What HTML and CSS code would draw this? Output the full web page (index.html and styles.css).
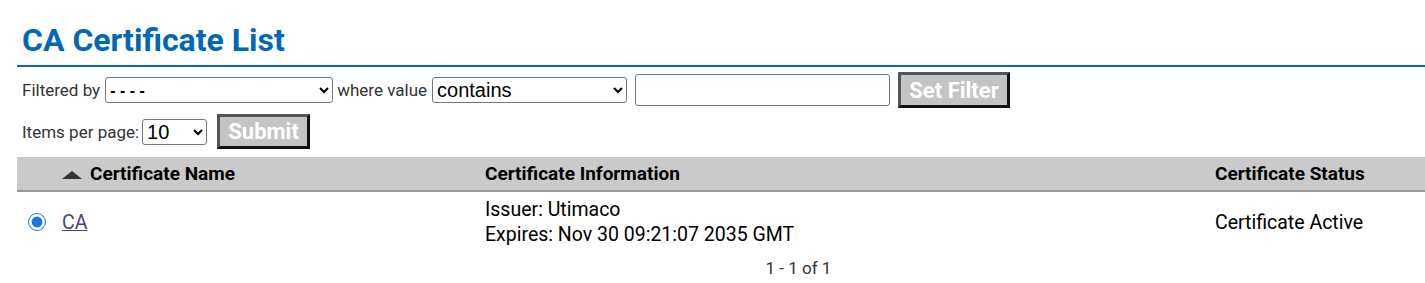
FILE: index.html
```html
<!DOCTYPE html>
<html>
<head>
<meta charset="utf-8">
<link rel="stylesheet" href="styles.css">
</head>
<body>
<div class="page">
  <h1 class="title">CA Certificate List</h1>
  <form class="filters">
    <div class="filter-row">
      <label class="lbl">Filtered by</label>
      <select class="sel sel-field"><option>- - - -</option></select>
      <label class="lbl">where value</label>
      <select class="sel sel-op"><option>contains</option></select>
      <input class="txt" type="text">
      <button type="button" class="btn btn-filter">Set Filter</button>
    </div>
    <div class="filter-row row2">
      <label class="lbl lbl-per">Items per page:</label>
      <select class="sel sel-per"><option>10</option></select>
      <button type="button" class="btn btn-submit">Submit</button>
    </div>
  </form>
  <table class="list">
    <colgroup>
      <col class="c1"><col class="c2"><col class="c3"><col class="c4">
    </colgroup>
    <thead>
      <tr>
        <th></th>
        <th><span class="sort"></span>Certificate Name</th>
        <th>Certificate Information</th>
        <th>Certificate Status</th>
      </tr>
    </thead>
    <tbody>
      <tr>
        <td class="radio-cell"><input type="radio" name="cert" checked class="radio"></td>
        <td><a href="#" class="link">CA</a></td>
        <td>Issuer: Utimaco<br>Expires: Nov 30 09:21:07 2035 GMT</td>
        <td>Certificate Active</td>
      </tr>
    </tbody>
  </table>
  <div class="pager">1 - 1 of 1</div>
</div>
</body>
</html>
```
FILE: styles.css
```css
html, body {
  margin: 0;
  padding: 0;
  overflow: hidden;
  background: #fff;
}
body {
  font-family: Roboto, "Liberation Sans", sans-serif;
  color: #111;
}
.page {
  width: 1563px;
  padding-left: 17px;
  padding-top: 19px;
}
.title {
  margin: 0;
  padding: 0 0 4px 5px;
  font-size: 32px;
  font-weight: 700;
  line-height: 42px;
  color: #0068b5;
  border-bottom: 2px solid #0068b5;
}
.filters {
  padding-left: 5px;
}
.filter-row {
  display: flex;
  align-items: center;
  height: 42px;
  margin-top: 2px;
}
.row2 {
  height: 41px;
  margin-top: 0;
}
.lbl {
  font-size: 17px;
  color: #333;
  margin-right: 5px;
}
.lbl-per {
  margin-right: 3px;
}
.sel {
  font-family: Arial, "Liberation Sans", sans-serif;
  color: #000;
  background: #fff;
  border: 1px solid #767676;
  border-radius: 3px;
  height: 26px;
  margin-right: 4px;
}
.sel-field { width: 228px; font-size: 16px; font-weight: 700; }
.sel-op { width: 195px; font-size: 20px; margin-right: 8px; }
.sel-per { width: 65px; font-size: 20px; margin-right: 10px; }
.txt {
  width: 255px;
  height: 32px;
  box-sizing: border-box;
  border: 1px solid #767676;
  border-radius: 3px;
  margin: 0 8px 0 0;
  padding: 0 4px;
}
.btn {
  box-sizing: border-box;
  background: #c4c4c4;
  color: #fff;
  font-family: Roboto, "Liberation Sans", sans-serif;
  font-weight: 700;
  font-size: 22px;
  border: 3px solid;
  border-color: #555 #111 #111 #555;
  padding: 0;
}
.btn-filter { width: 112px; height: 36px; }
.btn-submit { width: 93px; height: 35px; }
.list {
  margin-top: 5px;
  width: 1563px;
  border-collapse: collapse;
  table-layout: fixed;
}
.c1 { width: 38px; }
.c2 { width: 423px; }
.c3 { width: 730px; }
.list th {
  background: #cacaca;
  border-bottom: 2px solid #999;
  height: 33px;
  text-align: left;
  font-size: 19px;
  font-weight: 700;
  padding: 0 7px;
  color: #000;
}
.sort {
  display: inline-block;
  width: 0;
  height: 0;
  border-left: 10px solid transparent;
  border-right: 10px solid transparent;
  border-bottom: 8px solid #333;
  margin-right: 8px;
  vertical-align: 1px;
}
.list td {
  font-size: 19.5px;
  line-height: 25px;
  padding: 5px 7px;
  color: #000;
}
.radio-cell {
  padding-left: 11px !important;
}
.radio {
  width: 18px;
  height: 18px;
  margin: 0;
  display: block;
  accent-color: #1a73e8;
}
.link {
  color: #52407a;
}
.pager {
  text-align: center;
  width: 1563px;
  font-size: 17px;
  color: #333;
  margin-top: 6px;
}
```
